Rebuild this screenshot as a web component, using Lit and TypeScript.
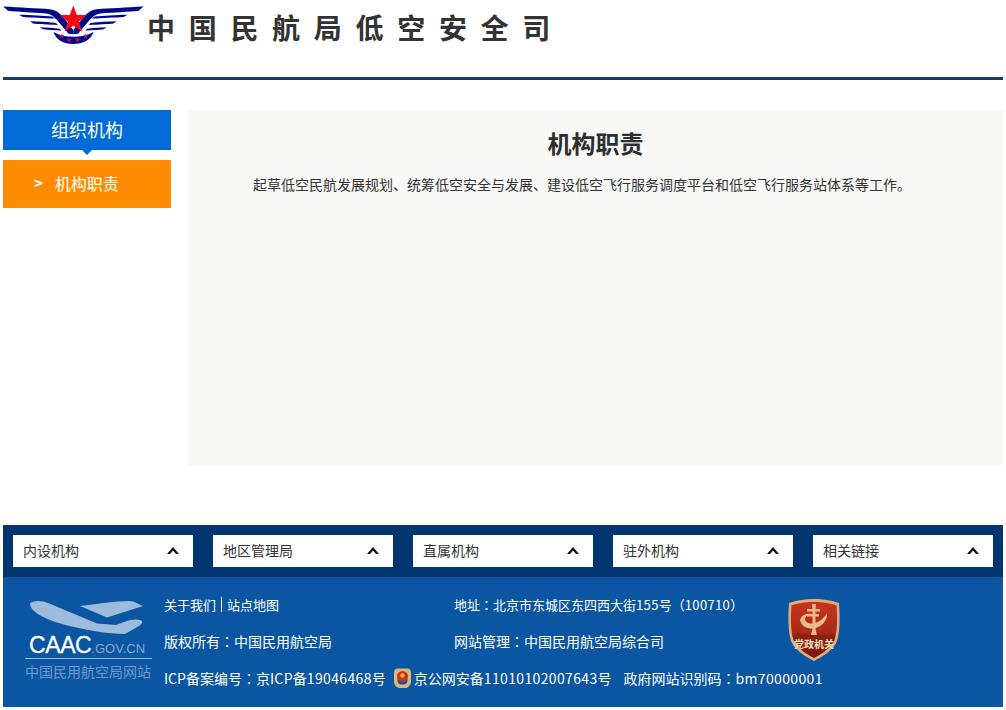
import { LitElement, html, css, svg } from "lit";
import { customElement } from "lit/decorators.js";

const wing = svg`
  <path d="M3 6.6 C20 7.6 38 8.4 50 9.2 C55 9.6 58 12 62 15.5 L73.3 30 L73.3 34.2 L68.5 33.8 L57.5 20.5 C54 16.5 51 14 46 13.4 C32 12.4 18 12 8 10.8 Z" fill="#00088c"/>
  <path d="M19 14.8 C31 15 44 15.8 52 16.6 L55 18.6 C44 18.2 30 17.5 23 17 Z" fill="#00088c"/>
  <path d="M30 21.3 C39 21.4 48 22 56 23 L58 25 C48 24.6 39 24 33 23.5 Z" fill="#00088c"/>
  <path d="M40 27.3 C47 27.4 54 28 59.5 28.8 L61.5 30.6 C54 30.2 48 30 43 29.3 Z" fill="#00088c"/>
`;

const tinyStar = (x: number, y: number) => svg`<polygon
  transform="translate(${x} ${y})"
  points="0,-2.6 0.7,-0.8 2.6,-0.8 1.1,0.4 1.6,2.2 0,1.1 -1.6,2.2 -1.1,0.4 -2.6,-0.8 -0.7,-0.8"
  fill="#e8102a"/>`;

const chevron = html`<svg class="chevron" viewBox="0 0 12 7">
  <path d="M0 6.9 L6 0 L12 6.9 L9 6.9 L6 3.6 L3 6.9 Z" fill="#111"></path>
</svg>`;

// the footer colons sit centred in their em box, which the TC cut gives us
const colon = html`<span class="colon">&#xFF1A;</span>`;

@customElement("app-root")
export class AppRoot extends LitElement {
  static styles = css`
    :host {
      display: block;
      width: 1000px;
      margin-left: 3px;
      font-family: "Noto Sans CJK SC", "Noto Sans", sans-serif;
      color: #333;
    }
    .header {
      height: 77px;
      border-bottom: 3px solid #173a73;
      display: flex;
      align-items: flex-start;
      gap: 1px;
    }
    .logo {
      width: 143px;
      height: 46px;
      display: block;
      flex: none;
    }
    .site-name {
      font-size: 28px;
      font-weight: 700;
      letter-spacing: 13.7px;
      line-height: 54px;
      white-space: nowrap;
      color: #333;
    }
    .body {
      display: flex;
      gap: 17px;
      margin-top: 30px;
      height: 355px;
    }
    .side {
      width: 168px;
      flex: none;
    }
    .side-title {
      position: relative;
      height: 40px;
      line-height: 38px;
      background: #006bd6;
      color: #fff;
      font-size: 18px;
      text-align: center;
      margin-bottom: 10px;
    }
    .side-title::after {
      content: "";
      position: absolute;
      left: 79px;
      top: 40px;
      border-left: 5px solid transparent;
      border-right: 5px solid transparent;
      border-top: 5px solid #006bd6;
    }
    .side-item {
      height: 48px;
      line-height: 46px;
      background: #ff8c00;
      color: #fff;
      font-size: 16px;
      display: flex;
      padding-left: 31px;
      gap: 12px;
    }
    .side-item b {
      font-weight: 700;
      font-size: 15px;
    }
    .main {
      flex: 1;
      background: #f8f8f6;
    }
    .main h1 {
      margin: 15px 0 0;
      font-size: 24px;
      line-height: 36px;
      font-weight: 700;
      text-align: center;
      color: #2e2e2e;
    }
    .main p {
      margin: 11px 0 0;
      padding-left: 65px;
      font-size: 14px;
      line-height: 24px;
      color: #333;
      white-space: nowrap;
    }
    .links {
      margin-top: 60px;
      height: 52px;
      background: #003570;
      display: flex;
      gap: 20px;
      padding: 10px;
      box-sizing: border-box;
    }
    .select {
      width: 180px;
      height: 32px;
      background: #fff;
      display: flex;
      align-items: center;
      justify-content: space-between;
      padding: 0 14px 0 10px;
      box-sizing: border-box;
      font-size: 14px;
      line-height: 30px;
      color: #333;
    }
    .select span {
      margin-bottom: 2px;
    }
    .chevron {
      width: 12px;
      height: 7px;
      display: block;
      margin-bottom: 2px;
    }
    .info {
      height: 130px;
      background: #0a56a3;
      color: #fff;
      display: flex;
      font-size: 14px;
      box-sizing: border-box;
      padding: 16px 0 0 22px;
    }
    .caac {
      width: 127px;
      flex: none;
      margin-right: 12px;
      padding-top: 7px;
    }
    .caac svg {
      display: block;
      width: 127px;
      height: 34px;
    }
    .caac-line {
      font-family: "Liberation Sans", sans-serif;
      font-size: 23px;
      line-height: 23px;
      height: 24px;
      padding-left: 4px;
      white-space: nowrap;
      border-bottom: 1px solid #9dbbdc;
      letter-spacing: -0.4px;
      -webkit-text-stroke: 0.3px #fff;
    }
    .caac-line span {
      font-size: 13px;
      color: #86a9d0;
      letter-spacing: 0;
      -webkit-text-stroke: 0;
    }
    .caac-name {
      font-size: 14px;
      line-height: 24px;
      color: #6f9ac8;
      white-space: nowrap;
    }
    .rows {
      display: grid;
      grid-template-columns: 290px 334px 52px;
      grid-template-rows: 24px 24px 24px;
      row-gap: 12px;
      line-height: 24px;
      white-space: nowrap;
    }
    .small {
      font-size: 13px;
    }
    .colon {
      font-family: "Noto Sans CJK TC", sans-serif;
    }
    .sep {
      display: inline-block;
      width: 1px;
      height: 15px;
      background: #fff;
      margin: 0 5px;
      vertical-align: -2px;
    }
    .num {
      letter-spacing: 0.35px;
    }
    .last {
      grid-column: 1 / -1;
      display: flex;
      align-items: center;
      padding-top: 2px;
    }
    .police {
      width: 17px;
      height: 20px;
      margin: 0 3px 0 8px;
      display: block;
      flex: none;
    }
    .gap {
      margin-left: 12px;
    }
    .shield {
      grid-column: 3;
      grid-row: 1 / 3;
      width: 52px;
      height: 62px;
      display: block;
      margin-top: 6px;
    }
  `;

  render() {
    const names = ["内设机构", "地区管理局", "直属机构", "驻外机构", "相关链接"];
    return html`
      <div class="header">
        <svg class="logo" viewBox="3 0 143 46">
          <g>${wing}</g>
          <g transform="translate(146.6 0) scale(-1 1)">${wing}</g>
          <polygon
            points="73.3,5.6 76.9,15 87,15 78.9,21.6 82,31.6 73.3,25.8 64.6,31.6 67.7,21.6 59.6,15 69.7,15"
            fill="#f40a14"/>
          <path d="M53.5 32 C60 35.5 66 36.8 73.3 36.8 C80.6 36.8 87 35.5 93.5 32 C91 40 83 44 73.3 44 C63.5 44 56 40 53.5 32 Z" fill="#00088c"/>
          ${tinyStar(61.6, 36)}${tinyStar(69, 40)}${tinyStar(77.6, 40)}${tinyStar(85.6, 36)}
        </svg>
        <div class="site-name">中国民航局低空安全司</div>
      </div>

      <div class="body">
        <div class="side">
          <div class="side-title">组织机构</div>
          <div class="side-item"><b>&gt;</b><span>机构职责</span></div>
        </div>
        <div class="main">
          <h1>机构职责</h1>
          <p>起草低空民航发展规划、统筹低空安全与发展、建设低空飞行服务调度平台和低空飞行服务站体系等工作。</p>
        </div>
      </div>

      <div class="links">
        ${names.map((n) => html`<div class="select"><span>${n}</span>${chevron}</div>`)}
      </div>

      <div class="info">
        <div class="caac">
          <svg viewBox="25 600 127 34">
            <path d="M30 603.5 C34 600 42 600.5 48 603 C62 609 82 617 97 623.5 L116 625 C124 622 133 618 140 620 C144 621.5 142 624 139 626 L125 634 C108 634 84 630 62 624 C46 619.5 30 612 30 603.5 Z" fill="#9dbbdc"/>
            <path d="M80 606 C96 604 118 601 129 601 C134 601 138 604 143 606 L107 617.5 Z" fill="#9dbbdc"/>
          </svg>
          <div class="caac-line">CAAC<span>.GOV.CN</span></div>
          <div class="caac-name">中国民用航空局网站</div>
        </div>
        <div class="rows">
          <div class="small">关于我们<i class="sep"></i>站点地图</div>
          <div class="small">地址${colon}北京市东城区东四西大街<span class="num">155</span>号&#xFF08;<span class="num">100710</span>&#xFF09;</div>
          <svg class="shield" viewBox="0 0 52 62">
            <defs>
              <linearGradient id="sh" x1="0" y1="0" x2="0" y2="1">
                <stop offset="0" stop-color="#c9341f"/>
                <stop offset="0.55" stop-color="#a82a18"/>
                <stop offset="0.6" stop-color="#8a2012"/>
                <stop offset="1" stop-color="#7a1a0e"/>
              </linearGradient>
            </defs>
            <path d="M26 0 C36 0 45 2 51 4 C52 18 52 32 49 42 C46 50 36 57 26 62 C16 57 6 50 3 42 C0 32 0 18 1 4 C7 2 16 0 26 0 Z" fill="#dcae7a"/>
            <path d="M26 3 C35 3 43 4.5 48.5 6.5 C49.5 19 49.5 31 46.5 41 C43.5 48 35 54.5 26 59 C17 54.5 8.5 48 5.5 41 C2.5 31 2.5 19 3.5 6.5 C9 4.5 17 3 26 3 Z" fill="url(#sh)"/>
            <g fill="#e9b98a">
              <path d="M24 5 H28 L27.5 10 H32 V12.5 H27.5 V15 H31 V17.5 H27.5 V30 L29 36 H23 L24.5 30 V17.5 H19 V15 H24.5 V12.5 H19 V10 H24.5 Z"/>
              <path d="M12 21 C14 15 20 14 23 15 C17 16.5 16 20 18 22.5 C23 27 33 24 39 14 C40 22 32 30 23 29.5 C17 29 13 26 12 21 Z"/>
            </g>
            <text x="26" y="49" text-anchor="middle" font-size="10" font-weight="700" fill="#f6e0c4">党政机关</text>
          </svg>
          <div>版权所有${colon}中国民用航空局</div>
          <div>网站管理${colon}中国民用航空局综合司</div>
          <div class="last">
            <span>ICP备案编号${colon}京<span class="num">ICP</span>备<span class="num">19046468</span>号</span>
            <svg class="police" viewBox="0 0 17 20">
              <path d="M4 0.5 H13 C16 0.5 17 2 17 5 V13 C17 17.5 14 20 11 20 H6 C3 20 0 17.5 0 13 V5 C0 2 1 0.5 4 0.5 Z" fill="#d9b878"/>
              <circle cx="8.5" cy="8.5" r="5.5" fill="#c8321e"/>
              <circle cx="8.5" cy="7.5" r="2.2" fill="#e8b030"/>
              <path d="M3.2 10.5 C5 14.5 12 14.5 13.8 10.5 L13 15 C11 17 6 17 4 15 Z" fill="#1d4f9c"/>
            </svg>
            <span>京公网安备<span class="num">11010102007643</span>号</span>
            <span class="gap">政府网站识别码${colon}<span class="num">bm70000001</span></span>
          </div>
        </div>
      </div>
    `;
  }
}
